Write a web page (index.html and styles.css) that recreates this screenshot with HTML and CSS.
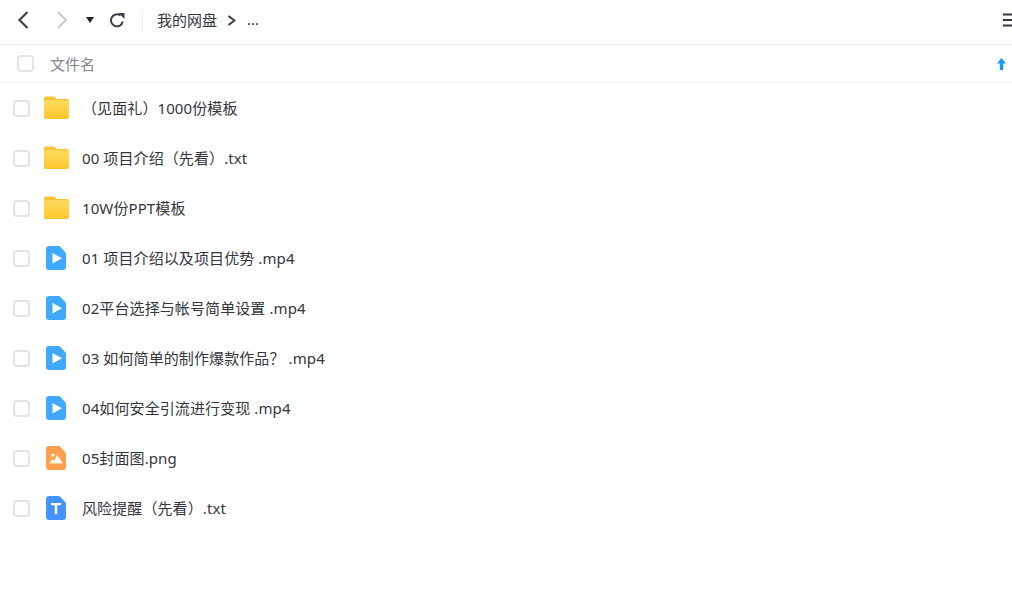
FILE: index.html
```html
<!DOCTYPE html>
<html lang="zh">
<head>
	<meta charset="UTF-8">
	<title>我的网盘</title>
	<link rel="stylesheet" href="styles.css">
</head>
<body>
	<svg class="defs" width="0" height="0">
		<defs>
			<linearGradient id="folder-fill" x1="0" y1="0" x2="0" y2="1">
				<stop offset="0" stop-color="#ffdb5e"/>
				<stop offset="1" stop-color="#ffc72e"/>
			</linearGradient>
		</defs>
		<symbol id="folder" viewBox="0 0 26 24">
			<path d="M2 .5h7.500c1 0 1.600.4 2.200 1.100L13 3h11c1.100 0 2 .9 2 2v17c0 1.100-.9 2-2 2H2c-1.100 0-2-.9-2-2V2.500C0 1.400.9.500 2 .5z" fill="#fbc13a"/>
			<path d="M1.800 4.500h22.400c1 0 1.800.8 1.800 1.800V22c0 1.100-.9 2-2 2H2c-1.100 0-2-.9-2-2V6.300c0-1 .8-1.800 1.800-1.800z" fill="url(#folder-fill)"/>
		</symbol>
		<symbol id="video" viewBox="0 0 20 24">
			<path d="M3 0h9.500c.8 0 1.500.3 2 .9l4.600 5c.6.600.9 1.300.9 2.100v13c0 1.700-1.300 3-3 3H3c-1.700 0-3-1.300-3-3V3c0-1.700 1.300-3 3-3z" fill="#3fa9ff"/>
			<path d="M6.500 7l9.500 5.200-9.500 5.300z" fill="#fff"/>
		</symbol>
		<symbol id="image" viewBox="0 0 20 24">
			<path d="M3 0h9.500c.8 0 1.500.3 2 .9l4.600 5c.6.600.9 1.300.9 2.100v13c0 1.700-1.300 3-3 3H3c-1.700 0-3-1.300-3-3V3c0-1.700 1.300-3 3-3z" fill="#ffa04f"/>
			<circle cx="7" cy="9" r="1.600" fill="#fff"/>
			<path d="M3 17.500l3.500-4.500 1.800 1.800L11 8.500l6 9z" fill="#fff" fill-opacity=".9"/>
		</symbol>
		<symbol id="text" viewBox="0 0 20 24">
			<path d="M3 0h9.500c.8 0 1.500.3 2 .9l4.600 5c.6.600.9 1.300.9 2.100v13c0 1.700-1.300 3-3 3H3c-1.700 0-3-1.300-3-3V3c0-1.700 1.300-3 3-3z" fill="#4593fc"/>
			<path d="M5 7h10v2.200h-3.800V18H8.800V9.200H5z" fill="#fff"/>
		</symbol>
	</svg>

	<div class="toolbar">
		<svg class="nav-icon" width="16" height="20" viewBox="0 0 16 20"><path d="M12.500 2L4.500 10l8 8" fill="none" stroke="#3c4048" stroke-width="2.200"/></svg>
		<svg class="nav-icon forward" width="16" height="20" viewBox="0 0 16 20"><path d="M4 2l8 8-8 8" fill="none" stroke="#c9cbd0" stroke-width="2"/></svg>
		<svg class="caret" width="8" height="6" viewBox="0 0 8 6"><path d="M0 0h8L4 6z" fill="#22252b"/></svg>
		<svg class="refresh" width="16" height="16" viewBox="0 0 16 16"><path d="M13.800 9.500A6 6 0 1 1 11.500 3.500" fill="none" stroke="#3c4048" stroke-width="2"/><path d="M9.500 1h6v6z" fill="#3c4048"/></svg>
		<span class="divider"></span>
		<span class="crumb">我的网盘</span>
		<svg class="crumb-arrow" width="9" height="11" viewBox="0 0 9 11"><path d="M1.500 1l6 4.500-6 4.500" fill="none" stroke="#33363c" stroke-width="1.900"/></svg>
		<span class="crumb-more">...</span>
		<svg class="menu" width="9" height="14" viewBox="0 0 9 14"><path d="M0 1.500h9M0 7h9M0 12.500h9" stroke="#33363c" stroke-width="2"/></svg>
	</div>

	<div class="list-head">
		<span class="check head-check"></span>
		<span class="head-name">文件名</span>
		<svg class="sort" width="9" height="12" viewBox="0 0 9 12"><path d="M4.500 0L9 5.500H6.200V12H2.800V5.500H0z" fill="#1a95fb"/></svg>
	</div>

	<ul class="files">
		<li><span class="check"></span><svg class="ico-folder"><use href="#folder"/></svg><span class="name">（见面礼）1000份模板</span></li>
		<li><span class="check"></span><svg class="ico-folder"><use href="#folder"/></svg><span class="name">00 项目介绍（先看）.txt</span></li>
		<li><span class="check"></span><svg class="ico-folder"><use href="#folder"/></svg><span class="name">10W份PPT模板</span></li>
		<li><span class="check"></span><svg class="ico-file"><use href="#video"/></svg><span class="name">01 项目介绍以及项目优势 .mp4</span></li>
		<li><span class="check"></span><svg class="ico-file"><use href="#video"/></svg><span class="name">02平台选择与帐号简单设置 .mp4</span></li>
		<li><span class="check"></span><svg class="ico-file"><use href="#video"/></svg><span class="name">03 如何简单的制作爆款作品？ .mp4</span></li>
		<li><span class="check"></span><svg class="ico-file"><use href="#video"/></svg><span class="name">04如何安全引流进行变现 .mp4</span></li>
		<li><span class="check"></span><svg class="ico-file"><use href="#image"/></svg><span class="name">05封面图.png</span></li>
		<li><span class="check"></span><svg class="ico-file"><use href="#text"/></svg><span class="name">风险提醒（先看）.txt</span></li>
	</ul>
</body>
</html>
```

FILE: styles.css
```css
html, body {
	margin: 0;
	padding: 0;
	background: #fff;
	overflow: hidden;
}

body {
	font-family: "Noto Sans", "Noto Sans CJK SC", sans-serif;
	font-size: 15px;
	color: #33363c;
}

.defs {
	display: block;
	height: 0;
}

.toolbar {
	display: flex;
	align-items: center;
	height: 45px;
	padding: 0 0 4px 15px;
	box-sizing: border-box;
	border-bottom: 1px solid #f3f3f4;
}

.forward {
	margin-left: 23px;
}

.caret {
	margin-left: 16px;
}

.refresh {
	margin-left: 15px;
}

.divider {
	width: 1px;
	height: 23px;
	background: #eeeeef;
	margin-left: 17px;
}

.crumb {
	margin-left: 14px;
	padding-bottom: 2px;
}

.crumb-arrow {
	margin-left: 10px;
}

.crumb-more {
	margin-left: 11px;
	padding-bottom: 2px;
}

.menu {
	margin-left: auto;
}

.list-head {
	display: flex;
	align-items: center;
	height: 37px;
	border-bottom: 1px solid #f3f3f4;
	padding-left: 17px;
	padding-right: 6px;
}

.head-name {
	margin-left: 16px;
	color: #83868c;
}

.sort {
	margin-left: auto;
}

.check {
	display: block;
	flex: none;
	width: 13px;
	height: 13px;
	border: 2px solid #e4e4e6;
	border-radius: 4px;
	background: #fff;
}

.files {
	list-style: none;
	margin: 0;
	padding: 0;
}

.files li {
	display: flex;
	align-items: center;
	height: 50px;
	padding-left: 13px;
}

.ico-folder {
	flex: none;
	width: 25px;
	height: 23px;
	margin-left: 14px;
	margin-right: 1px;
	margin-bottom: 1px;
}

.ico-file {
	flex: none;
	width: 20px;
	height: 24px;
	margin-left: 16px;
	margin-right: 3px;
}

.name {
	margin-left: 12px;
	padding-bottom: 2px;
	letter-spacing: .1px;
}

.ico-file + .name {
	margin-left: 13px;
}
```
